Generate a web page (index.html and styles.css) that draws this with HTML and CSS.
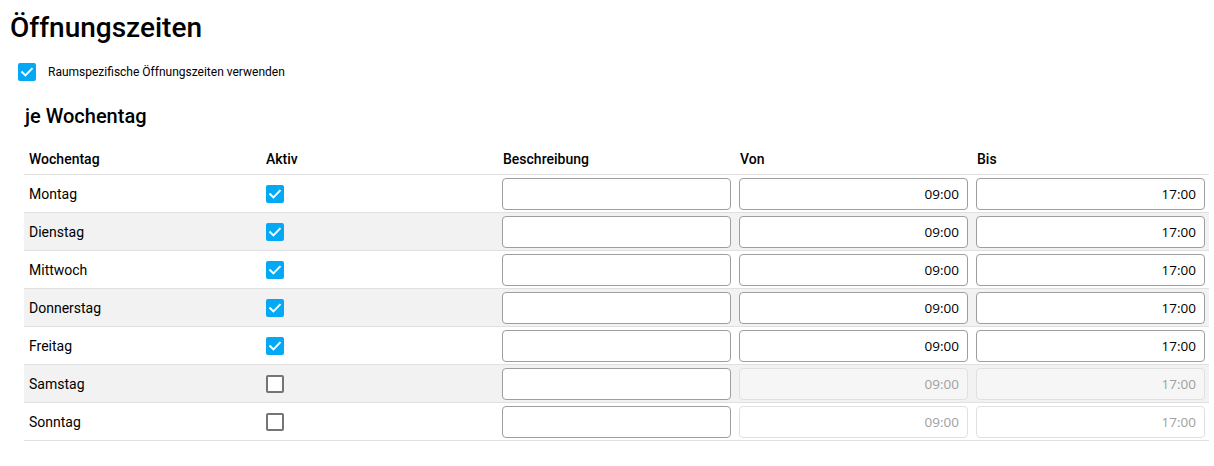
FILE: index.html
```html
<!DOCTYPE html>
<html lang="de">
<head>
    <meta charset="UTF-8">
    <title>Öffnungszeiten</title>
    <link rel="stylesheet" href="styles.css">
</head>
<body>

    <h1>Öffnungszeiten</h1>

    <label class="option">
        <span class="check on"><svg viewBox="0 0 18 18"><path d="M4.2 9.2l3.2 3.2 6.4-6.6"/></svg></span>
        Raumspezifische Öffnungszeiten verwenden
    </label>

    <h2>je Wochentag</h2>

    <table class="days">
        <thead>
            <tr>
                <th>Wochentag</th>
                <th>Aktiv</th>
                <th>Beschreibung</th>
                <th>Von</th>
                <th>Bis</th>
            </tr>
        </thead>
        <tbody>
            <tr>
                <td>Montag</td>
                <td><span class="check on"><svg viewBox="0 0 18 18"><path d="M4.2 9.2l3.2 3.2 6.4-6.6"/></svg></span></td>
                <td><input type="text"></td>
                <td><input type="text" class="time" value="09:00"></td>
                <td><input type="text" class="time" value="17:00"></td>
            </tr>
            <tr>
                <td>Dienstag</td>
                <td><span class="check on"><svg viewBox="0 0 18 18"><path d="M4.2 9.2l3.2 3.2 6.4-6.6"/></svg></span></td>
                <td><input type="text"></td>
                <td><input type="text" class="time" value="09:00"></td>
                <td><input type="text" class="time" value="17:00"></td>
            </tr>
            <tr>
                <td>Mittwoch</td>
                <td><span class="check on"><svg viewBox="0 0 18 18"><path d="M4.2 9.2l3.2 3.2 6.4-6.6"/></svg></span></td>
                <td><input type="text"></td>
                <td><input type="text" class="time" value="09:00"></td>
                <td><input type="text" class="time" value="17:00"></td>
            </tr>
            <tr>
                <td>Donnerstag</td>
                <td><span class="check on"><svg viewBox="0 0 18 18"><path d="M4.2 9.2l3.2 3.2 6.4-6.6"/></svg></span></td>
                <td><input type="text"></td>
                <td><input type="text" class="time" value="09:00"></td>
                <td><input type="text" class="time" value="17:00"></td>
            </tr>
            <tr>
                <td>Freitag</td>
                <td><span class="check on"><svg viewBox="0 0 18 18"><path d="M4.2 9.2l3.2 3.2 6.4-6.6"/></svg></span></td>
                <td><input type="text"></td>
                <td><input type="text" class="time" value="09:00"></td>
                <td><input type="text" class="time" value="17:00"></td>
            </tr>
            <tr>
                <td>Samstag</td>
                <td><span class="check"></span></td>
                <td><input type="text"></td>
                <td><input type="text" class="time" value="09:00" disabled></td>
                <td><input type="text" class="time" value="17:00" disabled></td>
            </tr>
            <tr>
                <td>Sonntag</td>
                <td><span class="check"></span></td>
                <td><input type="text"></td>
                <td><input type="text" class="time" value="09:00" disabled></td>
                <td><input type="text" class="time" value="17:00" disabled></td>
            </tr>
        </tbody>
    </table>

</body>
</html>
```

FILE: styles.css
```css
body {
    font-family: Roboto, Arial, sans-serif;
    margin: 0;
    padding: 11px 10px;
    background: #fff;
    color: #000;
}
h1 {
    font-size: 28px;
    font-weight: 500;
    margin: 0;
}
h2 {
    font-size: 20px;
    font-weight: 500;
    margin: 23px 0 0 15px;
}

/* top option */
.option {
    display: flex;
    align-items: center;
    gap: 12px;
    margin: 19px 0 0 8px;
    font-size: 12px;
    height: 18px;
}

/* checkbox look */
.check {
    display: block;
    box-sizing: border-box;
    width: 18px;
    height: 18px;
    border: 2px solid #757575;
    border-radius: 2px;
    background: #fff;
}
.check.on {
    border: none;
    background: #03a9f4;
}
.check svg {
    display: block;
    width: 18px;
    height: 18px;
}
.check path {
    fill: none;
    stroke: #fff;
    stroke-width: 2;
    stroke-linecap: square;
}

/* weekday table */
.days {
    width: 1185px;
    margin: 15px 0 0 14px;
    border-collapse: collapse;
    table-layout: fixed;
    font-size: 14px;
}
.days th {
    font-weight: 500;
    text-align: left;
    padding: 8px 4px 7px 5px;
    border-bottom: 1px solid #e0e0e0;
}
.days td {
    height: 37px;
    padding: 0 4px;
    vertical-align: middle;
    border-bottom: 1px solid #e0e0e0;
}
.days td:first-child {
    padding-left: 5px;
}
.days td:nth-child(2) {
    padding-left: 5px;
}
.days td:nth-child(2) .check {
    margin-top: 1px;
}
.days tbody tr:nth-child(even) {
    background: #f2f2f2;
}
.days input {
    display: block;
    box-sizing: border-box;
    width: 100%;
    height: 32px;
    padding: 0 8px;
    border: 1px solid #9e9e9e;
    border-radius: 4px;
    background: #fff;
    font-family: "Open Sans", sans-serif;
    font-size: 13.5px;
    color: #000;
}
.days input.time {
    text-align: right;
}
.days input:disabled {
    border-color: #e0e0e0;
    background: rgba(255, 255, 255, 0.3);
    color: #a0a0a0;
}
```
